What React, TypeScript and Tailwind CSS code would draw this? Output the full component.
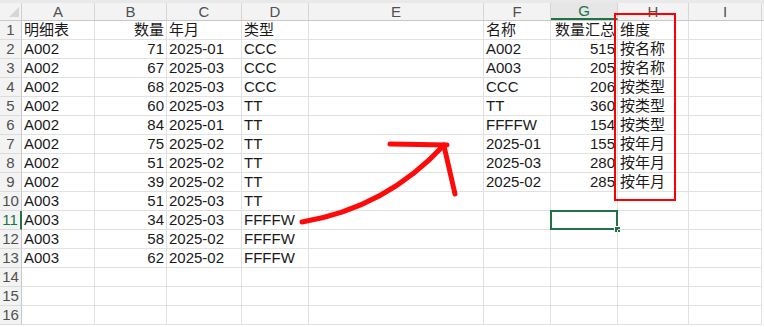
import React from "react";

type Col = { key: string; w: string; align?: "right" };

const COLS: Col[] = [
  { key: "A", w: "w-[73px]" },
  { key: "B", w: "w-[72px]", align: "right" },
  { key: "C", w: "w-[75px]" },
  { key: "D", w: "w-[67px]" },
  { key: "E", w: "w-[175px]" },
  { key: "F", w: "w-[67px]" },
  { key: "G", w: "w-[67px]", align: "right" },
  { key: "H", w: "w-[71px]" },
  { key: "I", w: "w-[73px]" },
];

// sheet contents, by row, columns A..H
const ROWS: string[][] = [
  ["明细表", "数量", "年月", "类型", "", "名称", "数量汇总", "维度"],
  ["A002", "71", "2025-01", "CCC", "", "A002", "515", "按名称"],
  ["A002", "67", "2025-03", "CCC", "", "A003", "205", "按名称"],
  ["A002", "68", "2025-03", "CCC", "", "CCC", "206", "按类型"],
  ["A002", "60", "2025-03", "TT", "", "TT", "360", "按类型"],
  ["A002", "84", "2025-01", "TT", "", "FFFFW", "154", "按类型"],
  ["A002", "75", "2025-02", "TT", "", "2025-01", "155", "按年月"],
  ["A002", "51", "2025-02", "TT", "", "2025-03", "280", "按年月"],
  ["A002", "39", "2025-02", "TT", "", "2025-02", "285", "按年月"],
  ["A003", "51", "2025-03", "TT"],
  ["A003", "34", "2025-03", "FFFFW"],
  ["A003", "58", "2025-02", "FFFFW"],
  ["A003", "62", "2025-02", "FFFFW"],
  [],
  [],
  [],
];

const ACTIVE_ROW = 11;
const ACTIVE_COL = "G";

export default function App() {
  return (
    <div
      className="relative w-[764px] h-[327px] overflow-hidden bg-white text-[#1a1a1a]"
      style={{ fontFamily: '"Liberation Sans", "Noto Sans CJK SC", sans-serif' }}
    >
      <div className="h-[3px] bg-[#e9e9e9]" />

      {/* column letters */}
      <div className="flex h-[18px] bg-[#f3f3f3] border-b border-[#c8c8c8]">
        <div className="relative w-[22px] border-r border-[#d0d0d0]">
          <div className="absolute right-[2px] bottom-[3px] w-0 h-0 border-l-[10px] border-l-transparent border-b-[10px] border-b-[#d6d6d6]" />
        </div>
        {COLS.map((c) => (
          <div
            key={c.key}
            className={`${c.w} flex items-center justify-center border-r border-[#d6d6d6] text-[15px] leading-none ${
              c.key === ACTIVE_COL ? "text-[#217346] bg-[#e6e6e6] border-b-2 border-b-[#217346]" : "text-[#505050]"
            }`}
          >
            {c.key}
          </div>
        ))}
      </div>

      {ROWS.map((row, i) => {
        const n = i + 1;
        const active = n === ACTIVE_ROW;
        return (
          <div key={n} className="flex h-[19px]">
            <div
              className={`w-[22px] flex items-end justify-center bg-[#f3f3f3] border-b border-[#dcdcdc] text-[15px] leading-[18px] ${
                active ? "text-[#217346] border-r-2 border-r-[#217346]" : "text-[#505050] border-r border-r-[#c8c8c8]"
              }`}
            >
              {n}
            </div>
            {COLS.map((c, j) => (
              <div
                key={c.key}
                className={`${c.w} relative flex items-end px-[2px] border-r border-b border-[#e1e1e1] text-[15px] leading-[18px] whitespace-nowrap ${
                  c.align === "right" ? "justify-end" : "justify-start"
                }`}
              >
                {row[j] ?? ""}
                {active && c.key === ACTIVE_COL && (
                  <div className="absolute -left-[1px] -top-[1px] -right-[1px] -bottom-[1px] border-2 border-[#217346]">
                    <div className="absolute -right-[4px] -bottom-[4px] w-[6px] h-[6px] bg-[#217346] border-l border-t border-white" />
                  </div>
                )}
              </div>
            ))}
          </div>
        );
      })}

      {/* hand-drawn markup on top of the sheet */}
      <div className="absolute left-[614px] top-[13px] w-[62px] h-[188px] border-2 border-[#ff0000] pointer-events-none" />
      <svg
        className="absolute inset-0 pointer-events-none"
        width="764"
        height="327"
        viewBox="0 0 764 327"
        fill="none"
      >
        <g stroke="#ff0a0a" strokeWidth="5" strokeLinecap="round" strokeLinejoin="round">
          <path d="M302 222 Q 386 208 444 145" />
          <path d="M390 144 L447 145" />
          <path d="M444 146 L455 194" />
        </g>
      </svg>
    </div>
  );
}
